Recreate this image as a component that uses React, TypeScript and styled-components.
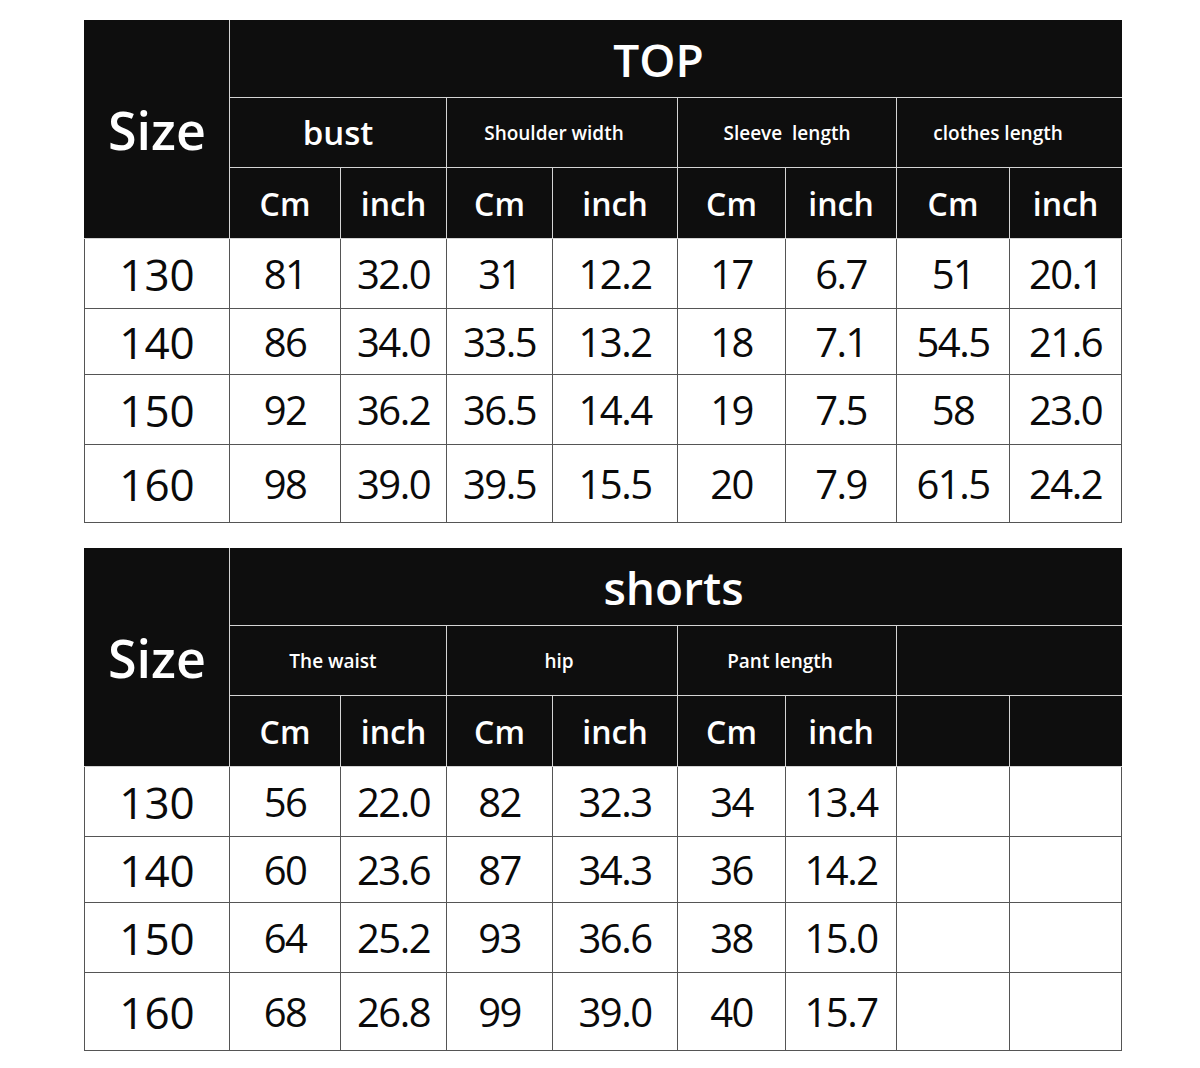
import styled, { createGlobalStyle } from "styled-components";

const GlobalStyle = createGlobalStyle`
  html, body {
    margin: 0;
    padding: 0;
    background: #ffffff;
  }
  body {
    font-family: "Open Sans", "Noto Sans", sans-serif;
  }
`;

const colWidths = [145, 111, 106, 106, 125, 108, 111, 113, 112];
const headRowHeights = [77, 70, 71];
const bodyRowHeights = [70, 66, 70, 78];
const sizes = ["130", "140", "150", "160"];

// shift = how far the label sits left of the cell's centre, in px
type Group = { label: string; big?: boolean; shift?: number };

const topGroups: Group[] = [
  { label: "bust", big: true },
  { label: "Shoulder width", shift: -8 },
  { label: "Sleeve  length" },
  { label: "clothes length", shift: -11 },
];

const topRows = [
  ["81", "32.0", "31", "12.2", "17", "6.7", "51", "20.1"],
  ["86", "34.0", "33.5", "13.2", "18", "7.1", "54.5", "21.6"],
  ["92", "36.2", "36.5", "14.4", "19", "7.5", "58", "23.0"],
  ["98", "39.0", "39.5", "15.5", "20", "7.9", "61.5", "24.2"],
];

const shortsGroups: Group[] = [
  { label: "The waist", shift: -5 },
  { label: "hip", shift: -3 },
  { label: "Pant length", shift: -7 },
  { label: "" },
];

const shortsRows = [
  ["56", "22.0", "82", "32.3", "34", "13.4", "", ""],
  ["60", "23.6", "87", "34.3", "36", "14.2", "", ""],
  ["64", "25.2", "93", "36.6", "38", "15.0", "", ""],
  ["68", "26.8", "99", "39.0", "40", "15.7", "", ""],
];

function SizeTable({
  title,
  titleShift,
  groups,
  rows,
  units,
}: {
  title: string;
  titleShift: number;
  groups: Group[];
  rows: string[][];
  units: number;
}) {
  return (
    <Table>
      <colgroup>
        {colWidths.map((w, i) => (
          <Col key={i} $w={w} />
        ))}
      </colgroup>
      <thead>
        <Row $h={headRowHeights[0]}>
          <SizeHead rowSpan={3}>Size</SizeHead>
          <TitleHead colSpan={8} $shift={titleShift}>
            {title}
          </TitleHead>
        </Row>
        <Row $h={headRowHeights[1]}>
          {groups.map((g, i) => (
            <GroupHead key={i} colSpan={2} $big={g.big} $shift={g.shift ?? 0}>
              {g.label}
            </GroupHead>
          ))}
        </Row>
        <Row $h={headRowHeights[2]}>
          {Array.from({ length: 8 }).map((_, i) => (
            <UnitHead key={i}>
              {i < units * 2 ? (i % 2 === 0 ? "Cm" : "inch") : ""}
            </UnitHead>
          ))}
        </Row>
      </thead>
      <tbody>
        {rows.map((row, r) => (
          <Row key={r} $h={bodyRowHeights[r]}>
            <SizeCell>{sizes[r]}</SizeCell>
            {row.map((v, c) => (
              <ValueCell key={c}>{v}</ValueCell>
            ))}
          </Row>
        ))}
      </tbody>
    </Table>
  );
}

export default function App() {
  return (
    <>
      <GlobalStyle />
      <Page>
        <SizeTable
          title="TOP"
          titleShift={-17}
          groups={topGroups}
          rows={topRows}
          units={4}
        />
        <SizeTable
          title="shorts"
          titleShift={-2}
          groups={shortsGroups}
          rows={shortsRows}
          units={3}
        />
      </Page>
    </>
  );
}

const Page = styled.div`
  display: flex;
  flex-direction: column;
  gap: 25px;
  padding: 20px 0 0 84px;
`;

const Table = styled.table`
  width: 1037px;
  table-layout: fixed;
  border-collapse: collapse;
`;

const Col = styled.col<{ $w: number }>`
  width: ${(p) => p.$w}px;
`;

const Row = styled.tr<{ $h: number }>`
  height: ${(p) => p.$h}px;
`;

const HeadCell = styled.th`
  background: #0e0e0e;
  color: #ffffff;
  font-weight: 600;
  text-align: center;
  vertical-align: middle;
  padding: 0;
  border: 1px solid #d4d4d4;
  border-top-color: #0e0e0e;
  white-space: pre;
`;

const SizeHead = styled(HeadCell)`
  font-size: 52px;
  border-left-color: #0e0e0e;
`;

const TitleHead = styled(HeadCell)<{ $shift: number }>`
  font-size: 46px;
  border-right-color: #0e0e0e;
  padding-right: ${(p) => -p.$shift * 2}px;
`;

const GroupHead = styled(HeadCell)<{ $big?: boolean; $shift: number }>`
  font-size: ${(p) => (p.$big ? "33px" : "19px")};
  padding-right: ${(p) => -p.$shift * 2}px;
  &:last-child {
    border-right-color: #0e0e0e;
  }
`;

const UnitHead = styled(HeadCell)`
  font-size: 32px;
  &:last-child {
    border-right-color: #0e0e0e;
  }
`;

const BodyCell = styled.td`
  padding: 0;
  text-align: center;
  vertical-align: middle;
  color: #0a0a0a;
  border: 1px solid #555555;
  line-height: 1;
`;

const SizeCell = styled(BodyCell)`
  font-size: 44px;
  font-weight: 500;
`;

const ValueCell = styled(BodyCell)`
  font-size: 40px;
  font-weight: 500;
  letter-spacing: -1.5px;
`;
